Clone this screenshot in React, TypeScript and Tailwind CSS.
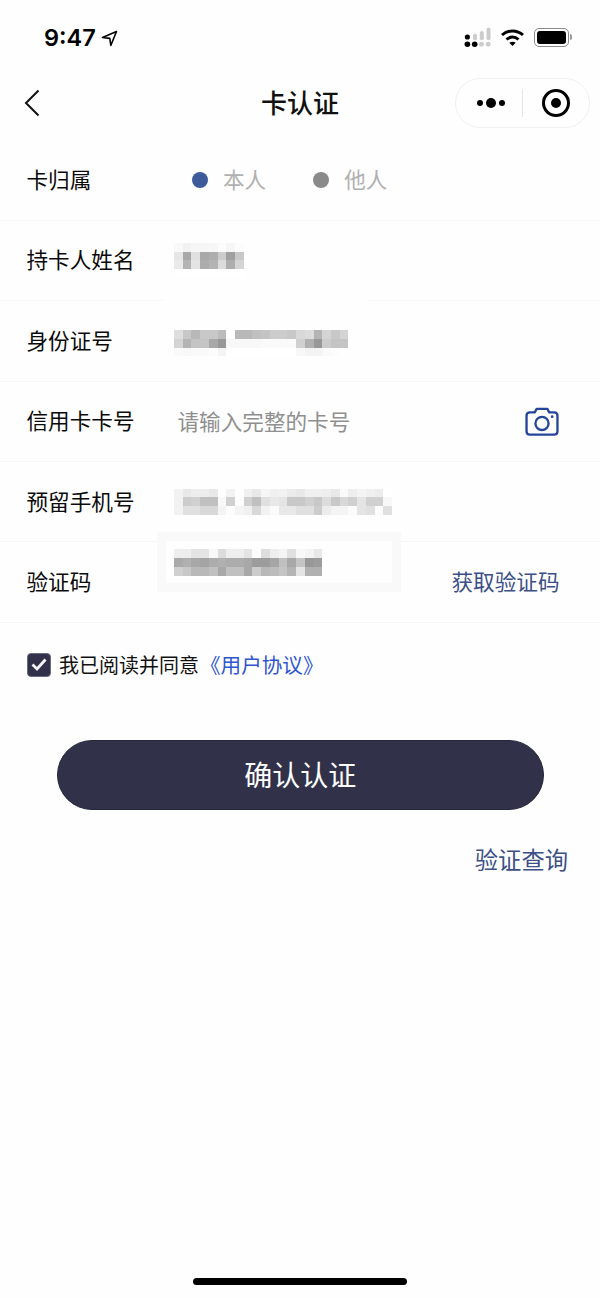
import React from 'react';

const labelFont = "font-['Noto_Sans_CJK_SC','Noto_Sans',sans-serif]";

const nameCells = [
  'f9f2f6f6f7fcf6fc',
  'e6a8e0a8aecca0c8',
  'eab4e4acb4dcaed4',
  'ffffffffffffffff',
];
const idCells = [
  'dec8b8c8c8bcffb8b8c0c4ccccc8d8dcb4d4c8d4',
  'd4b4c4c4a898f8f8f8f8fafafafad0b098ccc4c4',
  'faf8fafafcf4fffffffffffffffff8f4f4fafcff',
];
const phoneCells = [
  'f2e8eeeee8fff2fff0e8f6f0f2ece8f0f0eee8faeef4f0ecff',
  'f2ccd0c0c0f8d0fcd0c0e0e8e4c8c8d0c8dcc8d8d0e4d0d0f8',
  'f2e0e0d8d8f4fdf4f0d8f2fbe8e8e0e0ccecf4f4fbe4e0fce0',
];
const codeCells = [
  'eeeee4e4f8dceeeee4fcdeeef4e0f8f4e8',
  'aab0a8a4acb0acaca89c9ca6c0a8c4989c',
  'd0c8b8b8c0a8c0c0a8ccb8bcc4b4e4b0b0',
];

function Mosaic({ rows }: { rows: string[] }) {
  return (
    <div className="flex flex-col blur-[0.5px]">
      {rows.map((row, i) => (
        <div key={i} className="flex">
          {(row.match(/.{2}/g) || []).map((c, j) => (
            <div key={j} className="w-[8.72px] h-[8.72px]" style={{ backgroundColor: `#${c}${c}${c}` }} />
          ))}
        </div>
      ))}
    </div>
  );
}

function Row({ label, children }: { label: string; children: React.ReactNode }) {
  return (
    <div className="relative flex items-center h-[80.4px] pl-[26.5px] border-b border-[#f6f6f6]">
      <div className="w-[147.5px] shrink-0 pb-[2px] text-[21.6px] leading-[30px] text-[#0a0a0a]">{label}</div>
      {children}
    </div>
  );
}

export default function App() {
  return (
    <div className={`w-[600px] h-[1298px] bg-[#fefefe] flex flex-col overflow-hidden ${labelFont}`}>
      {/* status bar */}
      <div className="h-[64px] flex items-start justify-between pl-[44px] pr-[28px] pt-[24px]">
        <div className="flex items-center gap-[5px]">
          <span className="font-['Inter',sans-serif] font-semibold text-[23.5px] leading-[28px] text-black">9:47</span>
          <svg width="17" height="17" viewBox="0 0 17 17" fill="none" stroke="#000" strokeWidth="1.6" strokeLinejoin="round">
            <path d="M15.5 1.5 L1.5 7.5 L8.8 8.4 L9.8 15.5 Z" />
          </svg>
        </div>
        <div className="flex items-center gap-[9px] pt-[3px]">
          <svg width="27" height="20" viewBox="0 0 24 18" preserveAspectRatio="none">
            <circle cx="3" cy="9" r="2.3" fill="#000" />
            <rect x="8" y="6" width="3.6" height="6" rx="1.8" fill="#ccc" />
            <rect x="14" y="3.5" width="3.6" height="8.5" rx="1.8" fill="#ccc" />
            <rect x="20" y="0.5" width="3.6" height="11.5" rx="1.8" fill="#ccc" />
            <circle cx="3" cy="15.5" r="2.5" fill="#000" />
            <circle cx="9.5" cy="15.5" r="2.5" fill="#000" />
            <circle cx="15.5" cy="15.5" r="2.2" fill="#ccc" />
            <circle cx="21.5" cy="15.5" r="2.2" fill="#ccc" />
          </svg>
          <svg width="25" height="19" viewBox="0 0 25 19" fill="none" stroke="#000" strokeWidth="3">
            <path d="M2 7 C8 1.5 17 1.5 23 7" />
            <path d="M6.5 11.5 C10 8.3 15 8.3 18.5 11.5" />
            <path d="M12.5 18 L9.3 14.8 C11 13.3 14 13.3 15.7 14.8 Z" fill="#000" stroke="none" />
          </svg>
          <div className="flex items-center">
            <div className="w-[35px] h-[19px] rounded-[5px] border border-[#8a8a8a] p-[2px]">
              <div className="w-full h-full rounded-[3px] bg-black" />
            </div>
            <div className="w-[2px] h-[6px] ml-[1px] rounded-r bg-[#999]" />
          </div>
        </div>
      </div>

      {/* nav bar */}
      <div className="relative h-[76.4px] flex items-center justify-center">
        <svg className="absolute left-[24px] top-[25px]" width="16" height="28" viewBox="0 0 16 28" fill="none" stroke="#111" strokeWidth="2">
          <path d="M14.5 1.5 L2 14 L14.5 26.5" />
        </svg>
        <span className="text-[26px] leading-[36px] font-medium text-[#111]">卡认证</span>
        <div className="absolute left-[455px] top-[14px] w-[135px] h-[50px] rounded-full border border-[#f0f0f0] flex items-center">
          <div className="w-[66px] pl-[3px] flex items-center justify-center gap-[3px]">
            <div className="w-[6px] h-[6px] rounded-full bg-black" />
            <div className="w-[10px] h-[10px] rounded-full bg-black" />
            <div className="w-[6px] h-[6px] rounded-full bg-black" />
          </div>
          <div className="w-px h-[28px] bg-[#e6e6e6]" />
          <div className="flex-1 pr-[1px] flex items-center justify-center">
            <div className="w-[28px] h-[28px] rounded-full border-[3.5px] border-black flex items-center justify-center">
              <div className="w-[10px] h-[10px] rounded-full bg-black" />
            </div>
          </div>
        </div>
      </div>

      {/* form */}
      <div>
        <Row label="卡归属">
          <div className="flex items-center text-[21.6px] text-[#b0b0b0] pl-[18px]">
            <div className="w-[16px] h-[16px] rounded-full bg-[#3f5a9a]" />
            <span className="ml-[15px] pb-[2px]">本人</span>
            <div className="ml-[47px] w-[16px] h-[16px] rounded-full bg-[#8a8a8a]" />
            <span className="ml-[15px] pb-[2px]">他人</span>
          </div>
        </Row>
        <Row label="持卡人姓名">
          <Mosaic rows={nameCells} />
          <div className="absolute left-[163px] top-[79px] w-[204px] h-[3px] bg-[#fefefe]" />
        </Row>
        <Row label="身份证号">
          <div className="mt-[5px]">
            <Mosaic rows={idCells} />
          </div>
        </Row>
        <Row label="信用卡卡号">
          <span className="ml-[3.5px] text-[21.6px] text-[#8f8f8f]">请输入完整的卡号</span>
          <svg className="absolute left-[525px] top-[25px]" width="34" height="29" viewBox="0 0 35 30" fill="none" stroke="#24459a" strokeWidth="2.4" strokeLinejoin="round">
            <path d="M5 5.5 H10 L12 2 H23 L25 5.5 H30 C32 5.5 33.5 7 33.5 9 V25 C33.5 27 32 28.5 30 28.5 H5 C3 28.5 1.5 27 1.5 25 V9 C1.5 7 3 5.5 5 5.5 Z" />
            <circle cx="17.5" cy="17" r="6.8" />
            <circle cx="28" cy="10" r="1.4" fill="#24459a" stroke="none" />
          </svg>
        </Row>
        <Row label="预留手机号">
          <Mosaic rows={phoneCells} />
        </Row>
        <Row label="验证码">
          <div className="absolute left-[157px] top-[-10px] w-[244px] h-[60px] bg-[#fefefe] border-[9px] border-[#f9f9f9]" />
          <div className="absolute left-[174px] top-[7px]">
            <Mosaic rows={codeCells} />
          </div>
          <span className="absolute left-[451.5px] top-[24px] text-[21.6px] leading-[30px] text-[#3c4f87]">获取验证码</span>
        </Row>
      </div>

      {/* agreement */}
      <div className="flex items-center pl-[27px] mt-[29px] h-[26px]">
        <div className="w-[24px] h-[24px] rounded-[4px] bg-[#31324a] border border-[#6a6b80] flex items-center justify-center">
          <svg width="16" height="13" viewBox="0 0 16 13" fill="none" stroke="#f4f4f4" strokeWidth="2.8">
            <path d="M1.5 6.5 L6 11 L14.5 1.5" />
          </svg>
        </div>
        <span className="ml-[8px] text-[20px] text-[#111]">我已阅读并同意</span>
        <span className="ml-[1px] text-[20.6px] text-[#2f55d0]">《用户协议》</span>
      </div>

      {/* submit */}
      <div className="mt-[62.6px] ml-[56.5px] mr-[56px] h-[70px] pb-[3px] rounded-full bg-[#31324a] border border-[#24253a] flex items-center justify-center text-[28px] text-white">
        确认认证
      </div>
      <div className="mt-[32px] pr-[32px] text-right text-[23.3px] leading-[34px] text-[#3c4f87]">验证查询</div>

      {/* home indicator */}
      <div className="mt-auto mb-[13px] mx-auto w-[214px] h-[7px] rounded-full bg-black" />
    </div>
  );
}
